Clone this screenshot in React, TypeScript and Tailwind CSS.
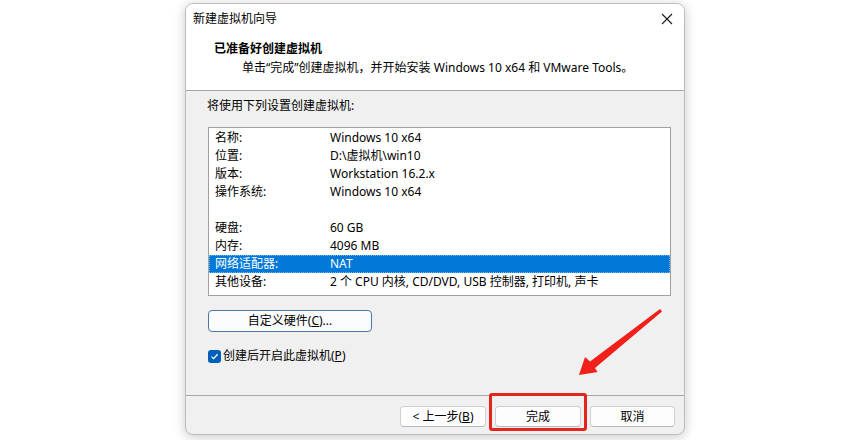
import React from "react";

const rows: [string, string][] = [
  ["名称:", "Windows 10 x64"],
  ["位置:", "D:\\虚拟机\\win10"],
  ["版本:", "Workstation 16.2.x"],
  ["操作系统:", "Windows 10 x64"],
  ["", ""],
  ["硬盘:", "60 GB"],
  ["内存:", "4096 MB"],
  ["网络适配器:", "NAT"],
  ["其他设备:", "2 个 CPU 内核, CD/DVD, USB 控制器, 打印机, 声卡"],
];

function Btn({ children, w }: { children: React.ReactNode; w: string }) {
  return (
    <div
      className={`${w} h-[21px] flex items-center justify-center rounded-[4px] border border-[#d0d0d0] border-b-[#b8b8b8] bg-[#fdfdfd] text-[12px] leading-[16px] text-black`}
    >
      {children}
    </div>
  );
}

export default function App() {
  return (
    <div className="relative w-[850px] h-[440px] overflow-hidden bg-white font-['Noto_Sans','Noto_Sans_CJK_SC',sans-serif] text-black">
      <div className="pl-[185px] pt-[3px]">
        <div className="w-[500px] h-[432px] rounded-[8px] border border-[#bdbdbd] bg-[#f0f0f0] shadow-[0_2px_12px_rgba(0,0,0,0.22)] flex flex-col overflow-hidden">
          {/* header */}
          <div className="h-[87px] shrink-0 bg-white border-b border-[#a5a5a5] flex flex-col">
            <div className="h-[30px] flex items-center justify-between pl-[7px] pr-[11px]">
              <span className="text-[12px] leading-[16px]">新建虚拟机向导</span>
              <svg width="12" height="12" viewBox="0 0 12 12">
                <path d="M1 1 L11 11 M11 1 L1 11" stroke="#1a1a1a" strokeWidth="1.1" />
              </svg>
            </div>
            <div className="mt-[7px] pl-[28px] text-[12px] leading-[16px] font-bold">已准备好创建虚拟机</div>
            <div className="mt-[3px] pl-[56px] text-[12px] leading-[16px]">
              单击“完成”创建虚拟机，并开始安装 Windows 10 x64 和 VMware Tools。
            </div>
          </div>

          {/* body */}
          <div className="flex-1 flex flex-col">
            <div className="mt-[7px] pl-[21px] text-[12px] leading-[16px]">将使用下列设置创建虚拟机:</div>
            <div className="mt-[13px] ml-[22px] w-[463px] h-[169px] border border-[#a0a0a0] bg-white pt-[1px]">
              {rows.map(([k, v], i) => (
                <div
                  key={i}
                  className={
                    i === 7
                      ? "h-[18px] flex items-center bg-[#0078d7] text-white outline outline-1 outline-dotted outline-[#7fb4e6] -outline-offset-1"
                      : "h-[18px] flex items-center"
                  }
                >
                  <span className="w-[121px] pl-[6px] text-[12px] leading-[16px] whitespace-nowrap">{k}</span>
                  <span className="text-[12px] leading-[16px] whitespace-nowrap">{v}</span>
                </div>
              ))}
            </div>
            <div className="mt-[14px] ml-[22px] w-[164px] h-[22px] flex items-center justify-center rounded-[4px] border border-[#4f74a6] bg-[#fbfcfd] text-[12px] leading-[16px]">
              自定义硬件(<span className="underline">C</span>)...
            </div>
            <div className="mt-[16px] ml-[22px] flex items-center h-[16px]">
              <div className="w-[13px] h-[13px] rounded-[3px] bg-[#005fb8] flex items-center justify-center">
                <svg width="9" height="9" viewBox="0 0 9 9">
                  <path d="M1.5 4.6 L3.6 6.6 L7.6 2.2" fill="none" stroke="white" strokeWidth="1.3" />
                </svg>
              </div>
              <span className="ml-[2px] text-[12px] leading-[16px]">
                创建后开启此虚拟机(<span className="underline">P</span>)
              </span>
            </div>
          </div>

          {/* footer */}
          <div className="h-[39px] shrink-0 border-t border-[#a5a5a5] flex justify-end items-start pt-[10px] pr-[9px] gap-[9px]">
            <Btn w="w-[86px]">
              &lt; 上一步(<span className="underline">B</span>)
            </Btn>
            <Btn w="w-[86px]">完成</Btn>
            <Btn w="w-[85px]">取消</Btn>
          </div>
        </div>
      </div>

      {/* annotation: red box */}
      <div className="absolute left-[489px] top-[393px] w-[98px] h-[38px] rounded-[3px] border-[3px] border-[#e3261d]" />
      {/* annotation: red arrow */}
      <svg className="absolute left-0 top-0" width="850" height="440" viewBox="0 0 850 440">
        <polygon
          points="579,375 585,357 590,361.5 660,309 662,311.5 595,368 597.5,372"
          fill="#f0201a"
        />
      </svg>
    </div>
  );
}
